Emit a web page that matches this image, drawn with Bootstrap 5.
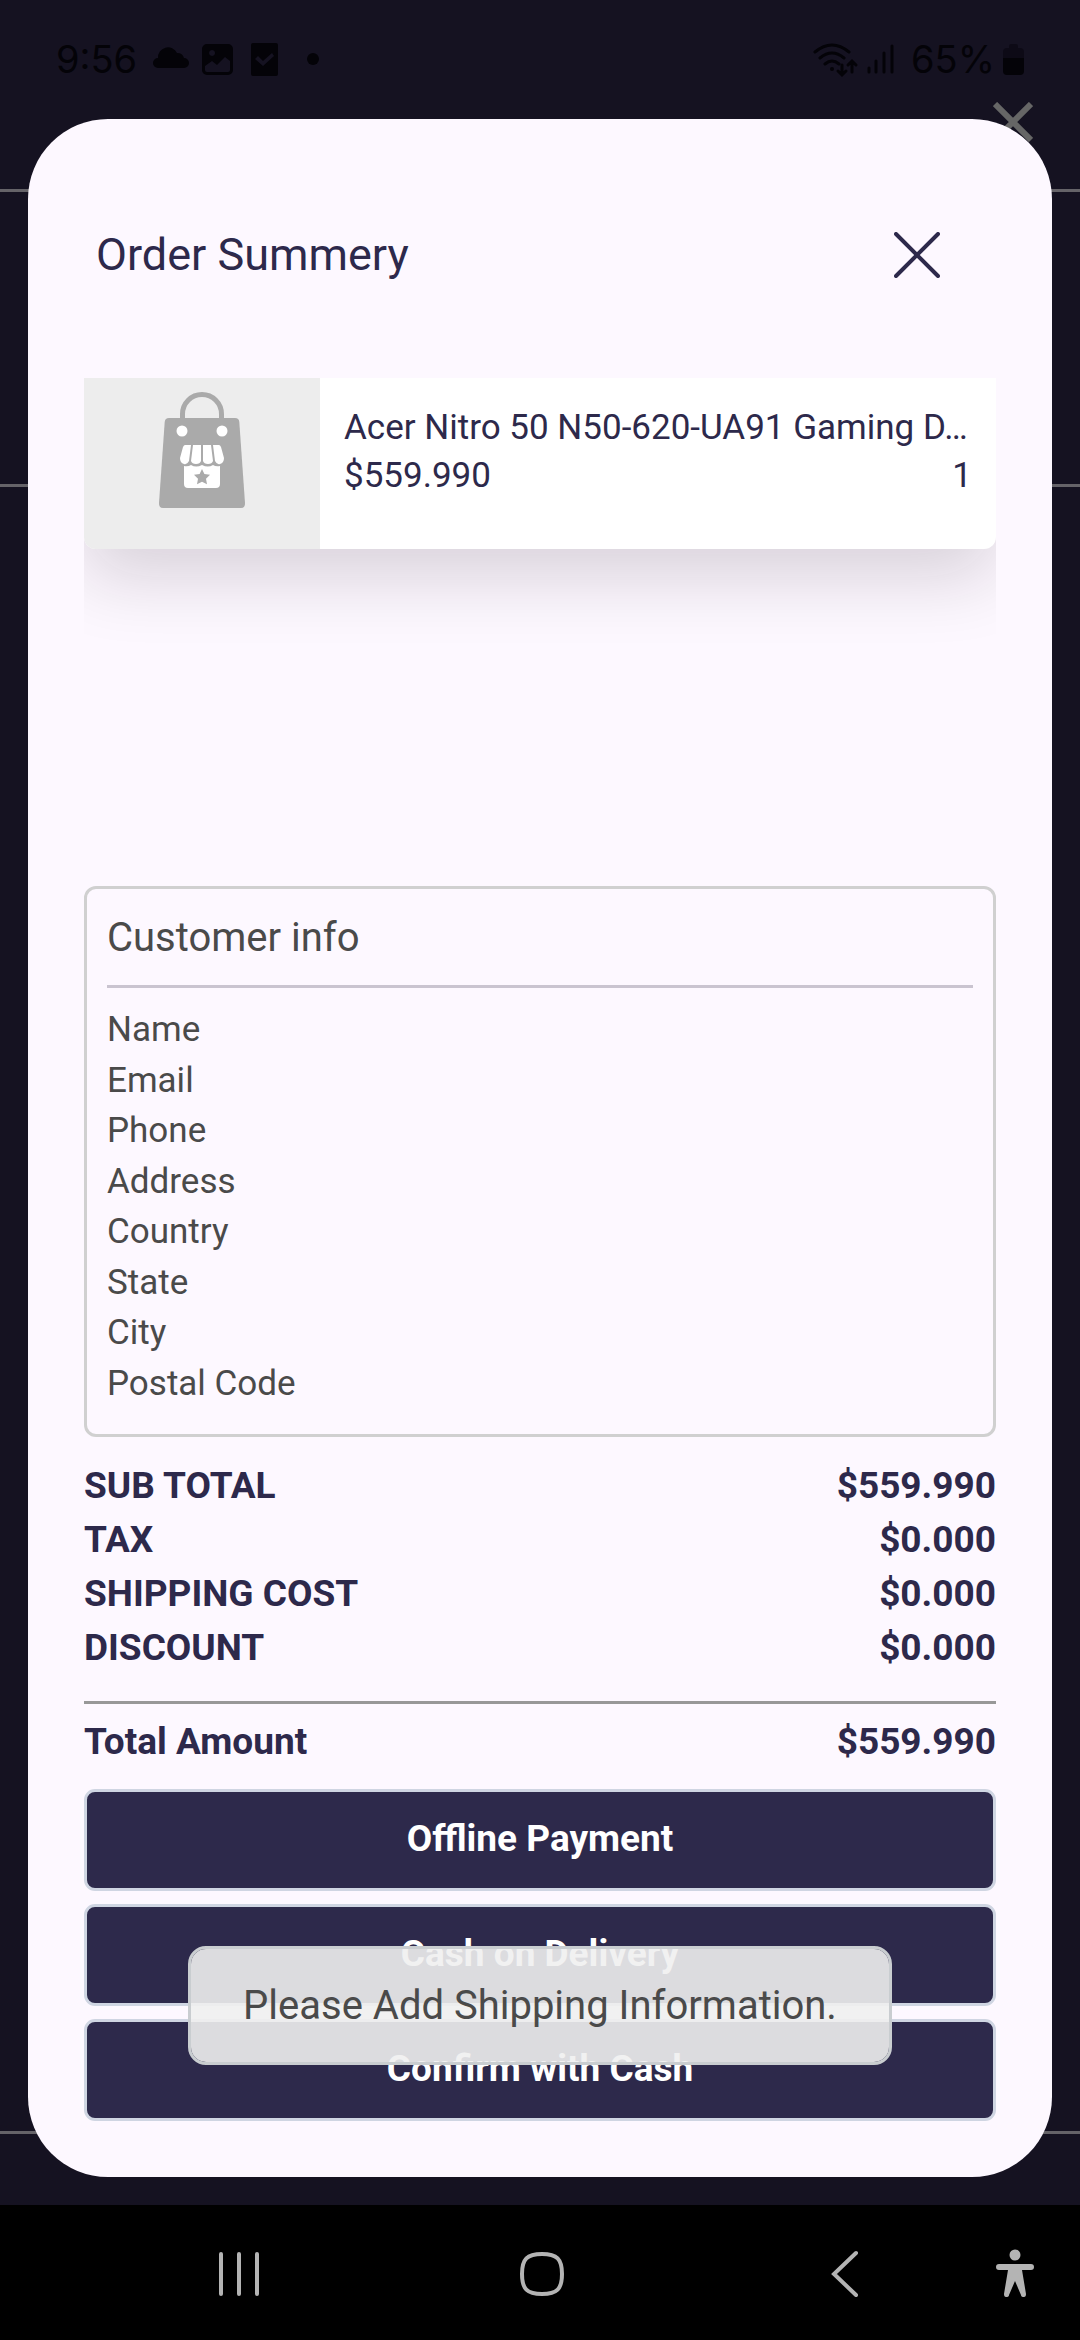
<!DOCTYPE html>
<html lang="en">
<head>
<meta charset="utf-8">
<meta name="viewport" content="width=device-width, initial-scale=1">
<title>Order Summery</title>
<link href="https://cdn.jsdelivr.net/npm/bootstrap@5.3.0/dist/css/bootstrap.min.css" rel="stylesheet">
<style>
  :root { --ink: #2d294b; --paper: #fdf8ff; --shade: #151221; --grey: #4a4a4a; }
  body { font-family: Roboto, "Noto Sans", sans-serif; background: var(--shade); color: var(--ink); }
  .backdrop-page { inset: 0; }
  .backdrop-page > div { border-bottom: 3px solid #656368; }
  .bp-head { height: 192px; padding: 102px 47px 0 0; }
  .bp-panel { height: 295px; }
  .bp-rest { margin-bottom: 206px; }
  .status-bar { height: 119px; padding: 0 56px; color: #040308; font: 38px/119px Inter, sans-serif; }
  .status-bar svg { fill: currentColor; }
  .sheet { background: var(--paper); margin: 0 28px 28px; padding: 0 56px 56px; border-radius: 80px; }
  .sheet-head { height: 259px; padding: 12px 56px 0 12px; }
  .sheet-head h1 { font-size: 45px; line-height: 60px; font-weight: 400; }
  .items { min-height: 300px; }
  .item { height: 171px; background: #fff; border-radius: 0 0 12px 12px; box-shadow: 0 28px 70px rgba(25,15,25,.16); }
  .item-pic { width: 236px; background: #ededed; border-radius: 0 0 0 12px; }
  .item-body { padding: 26px 24px 0; font-size: 35px; line-height: 48px; }
  .info { border: 3px solid #d0d0d0; border-radius: 12px; padding: 20px 20px 25px; color: var(--grey); font-size: 35px; line-height: 50px; }
  .info h2 { font-size: 40px; line-height: 57px; font-weight: 400; }
  .rule { border: 0; opacity: 1; height: 3px; background: #cac4d0; margin: 19px 0 17px; }
  .info ul { min-height: 404px; }
  .sums { font-size: 37px; line-height: 54px; font-weight: 700; margin-top: 22px; }
  .sums dt { font-weight: 700; }
  .sums .rule { background: #989898; margin: 26px 0 11px; }
  .pays { gap: 13px; margin-top: 20px; }
  .btn-pay { height: 102px; padding: 0 20px 2px; font-size: 37px; line-height: 54px; font-weight: 700; border: 3px solid #cfd5e2; border-radius: 11px; --bs-btn-color: #fff; --bs-btn-bg: #2d294b; --bs-btn-hover-color: #fff; --bs-btn-hover-bg: #3b3660; }
  .note { bottom: 112px; left: 160px; right: 160px; height: 119px; border: 3px solid #c9cdd0; border-radius: 18px; background: rgba(239,239,240,.9); background-clip: padding-box; color: var(--grey); font-size: 40px; }
  .nav-keys { height: 135px; background: #000; padding-left: 88px; }
  .nav-keys button { color: #b4b4b4; background: none; border: 0; padding: 0; }
  .key-side { width: 84px; }
</style>
</head>
<body>
<div class="position-relative d-flex flex-column min-vh-100">
  <div class="backdrop-page position-absolute d-flex flex-column">
    <div class="bp-head text-end">
      <svg class="d-block ms-auto" width="40" height="40" viewBox="0 0 40 40" stroke="#666" stroke-width="6"><path d="M2 2 38 38M38 2 2 38"/></svg>
    </div>
    <div class="bp-panel"></div>
    <div class="bp-rest flex-grow-1"></div>
  </div>

  <header class="status-bar position-relative d-flex align-items-center justify-content-between">
    <div class="d-flex align-items-center">
      <span>9:56</span>
      <svg class="ms-3" width="174" height="36" viewBox="0 0 174 36">
        <path d="M5 26a5 5 0 0 1 0-10 10 10 0 0 1 19-5 7 7 0 0 1 7 5 5 5 0 0 1 0 10z"/>
        <path fill-rule="evenodd" d="M54 2h21a5 5 0 0 1 5 5v21a5 5 0 0 1-5 5H54a5 5 0 0 1-5-5V7a5 5 0 0 1 5-5zM52 24v4q0 2 2 2h21q2 0 2-2v-9l-5-4-8 8-5-4zM59 8a3 3 0 1 0 .1 0z"/>
        <path fill-rule="evenodd" d="M100 1h23q2 0 2 2v29q0 2-2 2h-23q-2 0-2-2V3q0-2 2-2zM102 17l8 7 11-10-2-3-9 8-5-5z"/>
        <circle cx="160" cy="17" r="6"/>
      </svg>
    </div>
    <div class="d-flex align-items-center">
      <svg class="me-3" width="82" height="36" viewBox="0 0 82 36">
        <g fill="none" stroke="currentColor" stroke-width="3" stroke-linecap="round">
          <path d="M2 10q17-14 34 0M7 16q12-10 24 0M12 22q7-6 14 0"/>
          <path d="M29 23v9m-4-3 4 4 4-4M39 30V20m-4 3 4-4 4 4"/>
          <path d="M56 26v4M63 19v11M71 11v19M79 4v26"/>
        </g>
        <circle cx="19" cy="27" r="2"/>
      </svg>
      <span>65%</span>
      <svg class="ms-2" width="21" height="32" viewBox="0 0 21 32">
        <path opacity=".45" d="M6 4V2q0-2 2-2h5q2 0 2 2v2h2q4 0 4 4v7H0V8q0-4 4-4z"/>
        <path d="M0 14h21v13q0 4-4 4H4q-4 0-4-4z"/>
      </svg>
    </div>
  </header>

  <main class="sheet position-relative flex-grow-1 d-flex flex-column">
    <div class="sheet-head d-flex align-items-center justify-content-between">
      <h1 class="m-0">Order Summery</h1>
      <button type="button" class="btn p-0 border-0 d-flex" aria-label="Close">
        <svg width="46" height="46" viewBox="0 0 46 46" stroke="#2d294b" stroke-width="4" stroke-linecap="round"><path d="M2 2 44 44M44 2 2 44"/></svg>
      </button>
    </div>

    <section class="items flex-grow-1 overflow-hidden">
      <article class="item d-flex">
        <div class="item-pic flex-shrink-0">
          <svg class="d-block" width="236" height="171" viewBox="0 0 236 171">
            <path fill="none" stroke="#aaa" stroke-width="5" d="M98.500 42V36a19.500 19.500 0 0 1 39 0v6"/>
            <path fill="#aaa" d="M85 40h66q4 0 4.300 4L161 125q.3 5-4 5H79q-4.300 0-4-5L80.700 44Q81 40 85 40z"/>
            <g fill="#fff">
              <circle cx="98" cy="53" r="5.500"/><circle cx="138" cy="53" r="5.500"/>
              <path d="M101 67h6l-2 16q-2 4-5 3-4-1-4-6l3-11q1-2 2-2zM109 67h8v16q-1 3-5 3-4 0-5-3zM119 67h8l2 16q-1 3-5 3-4 0-5-3zM129 67h6q1 0 2 2l3 11q0 5-4 6-3 1-5-3z"/>
              <path d="M100 88q4 1 7-1 5 3 11 0 6 3 11 0 3 2 7 1v18q0 4-4 4h-28q-4 0-4-4z"/>
            </g>
            <path fill="#aaa" d="m118 91 2.400 5 5.600.8-4 4 1 5.500-5-2.600-5 2.600 1-5.500-4-4 5.600-.8z"/>
          </svg>
        </div>
        <div class="item-body flex-grow-1 overflow-hidden">
          <div class="text-truncate">Acer Nitro 50 N50-620-UA91 Gaming D…</div>
          <div class="d-flex justify-content-between"><span>$559.990</span><span>1</span></div>
        </div>
      </article>
    </section>

    <section class="info">
      <h2 class="m-0">Customer info</h2>
      <hr class="rule">
      <ul class="list-unstyled m-0 d-flex flex-column justify-content-between">
        <li>Name</li><li>Email</li><li>Phone</li><li>Address</li><li>Country</li><li>State</li><li>City</li><li>Postal Code</li>
      </ul>
    </section>

    <section class="sums">
      <dl class="m-0">
        <div class="d-flex justify-content-between"><dt>SUB TOTAL</dt><dd class="m-0">$559.990</dd></div>
        <div class="d-flex justify-content-between"><dt>TAX</dt><dd class="m-0">$0.000</dd></div>
        <div class="d-flex justify-content-between"><dt>SHIPPING COST</dt><dd class="m-0">$0.000</dd></div>
        <div class="d-flex justify-content-between"><dt>DISCOUNT</dt><dd class="m-0">$0.000</dd></div>
      </dl>
      <hr class="rule">
      <dl class="m-0 d-flex justify-content-between"><dt>Total Amount</dt><dd class="m-0">$559.990</dd></dl>
    </section>

    <div class="pays d-flex flex-column">
      <button type="button" class="btn btn-pay w-100">Offline Payment</button>
      <button type="button" class="btn btn-pay w-100">Cash on Delivery</button>
      <button type="button" class="btn btn-pay w-100">Confirm with Cash</button>
    </div>

    <div class="note position-absolute d-flex align-items-center justify-content-center text-nowrap" role="alert">Please Add Shipping Information.</div>
  </main>

  <nav class="nav-keys position-relative d-flex align-items-center" aria-label="System">
    <div class="flex-grow-1 d-flex">
      <button type="button" class="flex-fill" aria-label="Recents"><svg width="46" height="48" viewBox="0 0 46 48" stroke="currentColor" stroke-width="4" stroke-linecap="round"><path d="M5 5v40M23 5v40M41 5v40"/></svg></button>
      <button type="button" class="flex-fill" aria-label="Home"><svg width="46" height="48" viewBox="0 0 46 48" fill="none" stroke="currentColor" stroke-width="4"><path d="M23 5c15 0 20 5 20 20s-5 20-20 20S3 40 3 25 8 5 23 5z"/></svg></button>
      <button type="button" class="flex-fill" aria-label="Back"><svg width="46" height="48" viewBox="0 0 46 48" fill="none" stroke="currentColor" stroke-width="4" stroke-linecap="round"><path d="M34 4 12 25l22 21"/></svg></button>
    </div>
    <div class="key-side"><button type="button" aria-label="Accessibility"><svg width="38" height="48" viewBox="0 0 38 48" fill="currentColor"><circle cx="19" cy="6" r="5.500"/><path d="M3 15h32q3 0 3 3t-3 3h-9l4 24q0 3-2 3-3 0-3-2l-6-14-6 14q0 2-3 2-2 0-2-3l4-24H3q-3 0-3-3t3-3z"/></svg></button></div>
  </nav>
</div>
<script src="https://cdn.jsdelivr.net/npm/bootstrap@5.3.0/dist/js/bootstrap.bundle.min.js"></script>
</body>
</html>
